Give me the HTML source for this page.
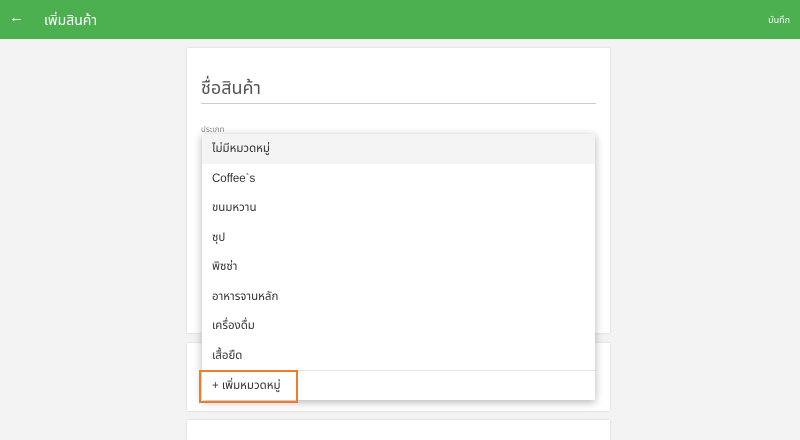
<!DOCTYPE html><html><head><meta charset="utf-8"><style>
body{margin:0;width:800px;height:423px;background:#f3f3f3;font-family:"Liberation Sans","Noto Sans Thai","Tlwg Typo",sans-serif;overflow:hidden;position:relative;color:#333}
.hdr{position:absolute;left:0;top:0;width:800px;height:39px;background:#4caf50;color:#fff}
.card{position:absolute;left:187px;width:423px;background:#fff;box-shadow:0 0 2px rgba(0,0,0,.15)}
.dd{position:absolute;left:202px;top:134px;width:393px;height:266px;background:#fff;box-shadow:0 2px 8px rgba(0,0,0,.3)}
.it{height:29.5px;line-height:31px;padding-left:10px;font-size:11.5px;color:#333}
</style></head><body>
<div class="hdr"><span style="position:absolute;left:9px;top:9px;font-size:15px">←</span><span style="position:absolute;left:44px;top:11px;font-size:14px">เพิ่มสินค้า</span><span style="position:absolute;right:10px;top:14px;font-size:9px">บันทึก</span></div>
<div class="card" style="top:48px;height:285px">
<div style="position:absolute;left:14px;top:28px;font-size:18px;color:#555">ชื่อสินค้า</div>
<div style="position:absolute;left:14px;top:55px;width:395px;height:1px;background:#ccc"></div>
<div style="position:absolute;left:14px;top:76px;font-size:8px;color:#888">ประเภท</div>
</div>
<div class="card" style="top:343px;height:68px"></div>
<div class="card" style="top:420px;height:20px"></div>
<div class="dd">
<div class="it" style="background:#f4f4f4">ไม่มีหมวดหมู่</div>
<div class="it">Coffee`s</div>
<div class="it">ขนมหวาน</div>
<div class="it">ซุป</div>
<div class="it">พิซซ่า</div>
<div class="it">อาหารจานหลัก</div>
<div class="it">เครื่องดื่ม</div>
<div class="it">เสื้อยืด</div>
<div class="it" style="border-top:1px solid #e4e4e4">+ เพิ่มหมวดหมู่</div>
</div>
<div style="position:absolute;left:199px;top:370px;width:95px;height:29px;border:2px solid #ef7b2c"></div>
</body></html>
